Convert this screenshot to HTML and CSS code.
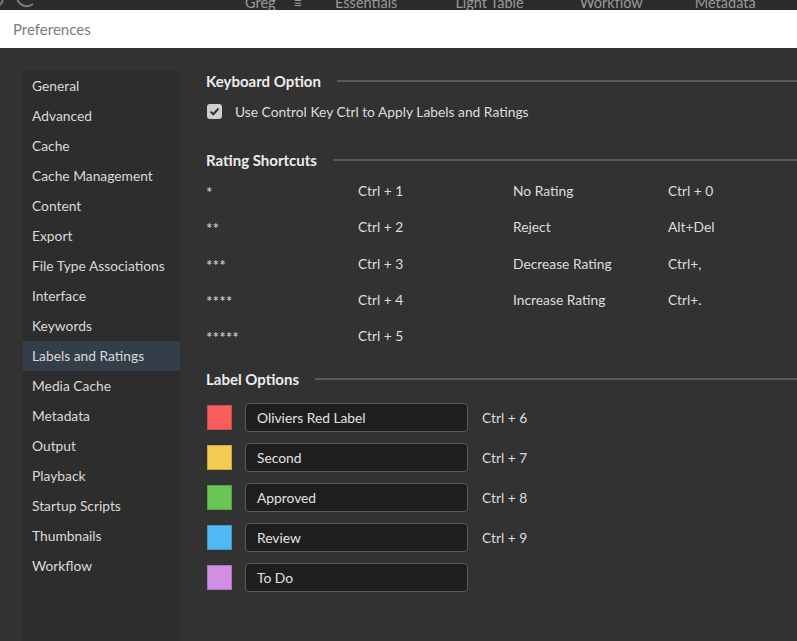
FILE: index.html
```html
<!DOCTYPE html>
<html>
<head>
<meta charset="utf-8">
<title>Preferences</title>
<link rel="stylesheet" href="styles.css">
</head>
<body>
<div class="topbar">
  <svg class="logo" width="40" height="10" viewBox="0 0 40 10">
    <path d="M3 -2 A 9 9 0 0 1 -6 7" fill="none" stroke="#7a7a7a" stroke-width="2"/>
    <path d="M17 -2 A 10 10 0 0 0 33 4" fill="none" stroke="#7a7a7a" stroke-width="2"/>
  </svg>
  <div class="toprow">
    <span class="tb tb-greg">Greg</span>
    <span class="tb tb-menu">≡</span>
    <span class="tb tb-ess">Essentials</span>
    <span class="tb tb-lt">Light Table</span>
    <span class="tb tb-wf">Workflow</span>
    <span class="tb tb-md">Metadata</span>
  </div>
</div>
<div class="titlebar">Preferences</div>
<div class="main">
  <nav class="sidebar">
    <div class="nav-item">General</div>
    <div class="nav-item">Advanced</div>
    <div class="nav-item">Cache</div>
    <div class="nav-item">Cache Management</div>
    <div class="nav-item">Content</div>
    <div class="nav-item">Export</div>
    <div class="nav-item">File Type Associations</div>
    <div class="nav-item">Interface</div>
    <div class="nav-item">Keywords</div>
    <div class="nav-item active">Labels and Ratings</div>
    <div class="nav-item">Media Cache</div>
    <div class="nav-item">Metadata</div>
    <div class="nav-item">Output</div>
    <div class="nav-item">Playback</div>
    <div class="nav-item">Startup Scripts</div>
    <div class="nav-item">Thumbnails</div>
    <div class="nav-item">Workflow</div>
  </nav>
  <section class="content">
    <div class="sec-head"><span class="sec-title">Keyboard Option</span><span class="sec-line"></span></div>
    <label class="check-row">
      <span class="checkbox">
        <svg width="15" height="15" viewBox="0 0 15 15"><path d="M3.6 7.6 L6.3 10.2 L11.4 4.6" fill="none" stroke="#2e2e2e" stroke-width="2"/></svg>
      </span>
      <span>Use Control Key Ctrl to Apply Labels and Ratings</span>
    </label>

    <div class="sec-head sec-rating"><span class="sec-title">Rating Shortcuts</span><span class="sec-line"></span></div>
    <div class="rating-grid">
      <span class="stars">*</span><span>Ctrl + 1</span><span>No Rating</span><span>Ctrl + 0</span>
      <span class="stars">**</span><span>Ctrl + 2</span><span>Reject</span><span>Alt+Del</span>
      <span class="stars">***</span><span>Ctrl + 3</span><span>Decrease Rating</span><span>Ctrl+,</span>
      <span class="stars">****</span><span>Ctrl + 4</span><span>Increase Rating</span><span>Ctrl+.</span>
      <span class="stars">*****</span><span>Ctrl + 5</span><span></span><span></span>
    </div>

    <div class="sec-head sec-label"><span class="sec-title">Label Options</span><span class="sec-line"></span></div>
    <div class="labels">
      <div class="label-row"><span class="swatch red"></span><div class="field">Oliviers Red Label</div><span class="key">Ctrl + 6</span></div>
      <div class="label-row"><span class="swatch yellow"></span><div class="field">Second</div><span class="key">Ctrl + 7</span></div>
      <div class="label-row"><span class="swatch green"></span><div class="field">Approved</div><span class="key">Ctrl + 8</span></div>
      <div class="label-row"><span class="swatch blue"></span><div class="field">Review</div><span class="key">Ctrl + 9</span></div>
      <div class="label-row"><span class="swatch purple"></span><div class="field">To Do</div><span class="key"></span></div>
    </div>
  </section>
</div>
</body>
</html>
```

FILE: styles.css
```css
* { box-sizing: border-box; }
html, body {
  margin: 0;
  padding: 0;
  background: #323232;
  font-family: "Lato", "Open Sans", sans-serif;
  width: 797px;
  height: 641px;
  overflow: hidden;
}
.topbar {
  height: 10px;
  background: #2b2b2b;
  overflow: hidden;
  display: flex;
  align-items: flex-start;
}
.logo { flex: none; display: block; }
.toprow {
  display: flex;
  margin-top: -5px;
  color: #9a9a9a;
  font-size: 14.5px;
  line-height: 15px;
  white-space: nowrap;
}
.tb-greg { margin-left: 205px; }
.tb-menu { margin-left: 18px; }
.tb-ess { margin-left: 33px; }
.tb-lt { margin-left: 58px; }
.tb-wf { margin-left: 56px; }
.tb-md { margin-left: 52px; }

.titlebar {
  height: 38px;
  background: #ffffff;
  color: #7c7c7c;
  font-size: 15px;
  display: flex;
  align-items: center;
  padding-left: 13px;
}
.main {
  display: flex;
  height: 593px;
}
.sidebar {
  margin-left: 23px;
  margin-top: 22px;
  width: 157px;
  background: #2d2d2d;
  padding-top: 1px;
}
.nav-item {
  height: 30px;
  line-height: 30px;
  padding-left: 9px;
  color: #dadada;
  font-size: 13.8px;
  white-space: nowrap;
}
.nav-item.active { background: #343e49; }

.content {
  flex: 1;
  padding-left: 26px;
  padding-top: 23px;
  color: #dedede;
  font-size: 13.8px;
}
.sec-head {
  display: flex;
  align-items: center;
  height: 20px;
  gap: 16px;
}
.sec-title {
  font-weight: 700;
  font-size: 15px;
  color: #ececec;
  white-space: nowrap;
}
.sec-line {
  flex: 1;
  height: 2px;
  background: #595959;
  margin-top: -1px;
}
.check-row {
  display: flex;
  align-items: center;
  gap: 13px;
  height: 20px;
  margin-top: 10px;
  padding-left: 1px;
}
.checkbox {
  width: 15px;
  height: 15px;
  border-radius: 3px;
  background: #cfcfcf;
  display: block;
}
.checkbox svg { display: block; }

.sec-rating { margin-top: 29px; }
.rating-grid {
  display: grid;
  grid-template-columns: 152px 155px 155px 1fr;
  grid-auto-rows: 36.25px;
  margin-top: 3px;
  line-height: 36px;
}
.stars { font-size: 15.5px; line-height: 39px; }
.sec-label { margin-top: 15px; }
.labels { margin-top: 8px; }
.label-row {
  display: flex;
  align-items: center;
  height: 40px;
}
.swatch {
  width: 25px;
  height: 25px;
  margin-left: 1px;
  border: 1px solid rgba(0,0,0,0.18);
  display: block;
  flex: none;
}
.red { background: #fb5c5c; }
.yellow { background: #f3cd52; }
.green { background: #6ac654; }
.blue { background: #50b8f3; }
.purple { background: #d28ee2; }
.field {
  margin-left: 13px;
  width: 223px;
  height: 29px;
  border: 1px solid #5a5a5a;
  border-radius: 4px;
  background: #1e1e1e;
  color: #e2e2e2;
  padding-left: 11px;
  line-height: 27px;
  flex: none;
}
.key { margin-left: 14px; }
```
